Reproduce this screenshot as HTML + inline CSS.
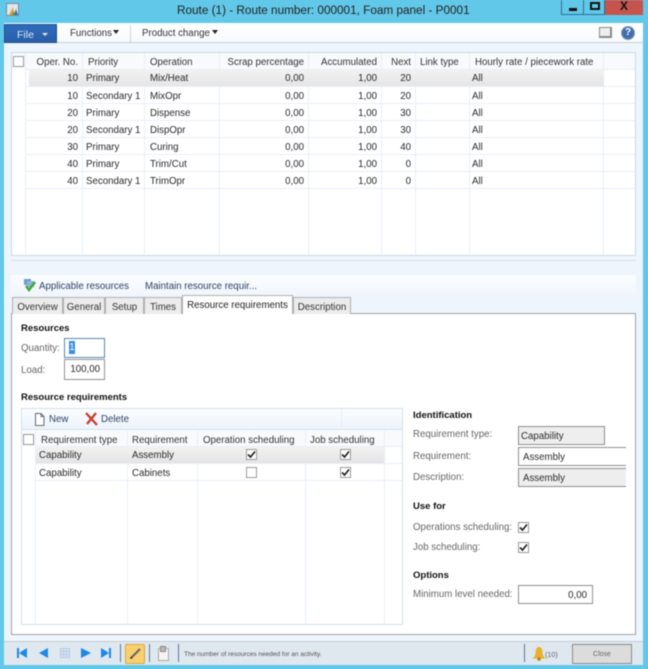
<!DOCTYPE html>
<html><head><meta charset="utf-8"><style>
html,body{margin:0;padding:0}
body{width:648px;height:669px;overflow:hidden;background:#62c8e9;position:relative;font-family:"Liberation Sans",sans-serif;font-size:9.7px;color:#2a2a2a}
#w{position:absolute;left:0;top:0;width:648px;height:669px;filter:blur(.45px);overflow:hidden}
div,span.a,svg.a{position:absolute;box-sizing:border-box}
.t{white-space:nowrap;line-height:14px;height:14px;margin-top:1px}
.r{text-align:right}
.h{color:#333}
.l{color:#666}
.b{font-weight:bold;color:#111;font-size:9.5px}
.vl{width:1px;background:#e6eff8}
.hl{height:1px;background:#e6eff8}
.cb{width:11px;height:11px;border:1px solid #9a9a9a;background:#fff}
.cb svg{position:absolute;left:0;top:0}
.tab{top:297px;height:17px;background:#ececec;border:1px solid #b0b0b0;border-bottom:none;text-align:center;line-height:19px;color:#333;white-space:nowrap}
.in{background:#fff;border:1px solid #8f8f8f;line-height:19px;padding:0 3px;white-space:nowrap;overflow:hidden}
</style></head><body><div id="w">
<div style="left:6px;top:3px;width:13px;height:13px;background:#dfe6ee;border:1px solid #7d8b9c"></div>
<svg class="a" style="left:7px;top:4px" width="12" height="12"><path d="M2 11L6 3L7 11Z" fill="#e8a020"/><path d="M7 11L9 5L11 11Z" fill="#3a6db0"/><path d="M5 11L7 7L8 11Z" fill="#4a9a40"/></svg>
<div class="t" style="left:177px;top:1px;font-size:11.75px;line-height:17px;height:17px;color:#222">Route (1) - Route number: 000001, Foam panel - P0001</div>
<div style="left:561px;top:0;width:23px;height:15px;background:#62c8e9;border:1px solid #2d6f92;border-top:none"></div>
<div style="left:569px;top:8px;width:8px;height:3px;background:#111"></div>
<div style="left:584px;top:0;width:21px;height:15px;background:#62c8e9;border:1px solid #2d6f92;border-left:none;border-top:none"></div>
<div style="left:590px;top:2px;width:10px;height:8px;border:2px solid #111"></div>
<div style="left:605px;top:0;width:38px;height:15px;background:#c4544c"></div>
<div class="t" style="left:620px;top:-2px;font-size:12px;font-weight:bold;color:#111;line-height:14px">X</div>

<div style="left:4px;top:23px;width:639px;height:642px;background:#eef5fc"></div>
<div style="left:4px;top:23px;width:639px;height:20px;background:linear-gradient(#fff,#f8fafd);border-bottom:1px solid #c6ced7"></div>
<div style="left:4px;top:24px;width:53px;height:19px;background:linear-gradient(#2f6cbc,#2a5ea8);border:1px solid #1f4f90"></div>
<div class="t" style="left:17px;top:27px;color:#dce8f6;font-size:10.5px">File</div>
<div style="left:42px;top:33px;border:3px solid transparent;border-top:3px solid #e5eef8;border-bottom:none;width:0;height:0"></div>
<div class="t" style="left:70px;top:26px;color:#333">Functions</div>
<div style="left:113px;top:30px;border:3px solid transparent;border-top:4px solid #222;border-bottom:none;width:0;height:0"></div>
<div style="left:130px;top:25px;width:1px;height:17px;background:#d0d6dd"></div>
<div class="t" style="left:142px;top:26px;color:#333">Product change</div>
<div style="left:212px;top:30px;border:3px solid transparent;border-top:4px solid #222;border-bottom:none;width:0;height:0"></div>
<div style="left:599px;top:27px;width:13px;height:11px;background:#eee;border:1px solid #8a8a8a;border-right-width:2px;border-bottom-width:2px"></div>
<div style="left:621px;top:26px;width:14px;height:14px;border-radius:50%;background:#3f6fb0;border:1px solid #8b9bb0;color:#fff;font-size:10px;font-weight:bold;text-align:center;line-height:12px">?</div>

<!-- top grid -->
<div style="left:11px;top:52px;width:625px;height:204px;background:#fff;border:1px solid #c9d9ea"></div>
<div style="left:12px;top:53px;width:623px;height:16px;background:#f8fafc"></div>
<div class="vl" style="left:25px;top:53px;height:202px"></div>
<div class="vl" style="left:82px;top:53px;height:202px"></div>
<div class="vl" style="left:144px;top:53px;height:202px"></div>
<div class="vl" style="left:219px;top:53px;height:202px"></div>
<div class="vl" style="left:308px;top:53px;height:202px"></div>
<div class="vl" style="left:381px;top:53px;height:202px"></div>
<div class="vl" style="left:415px;top:53px;height:202px"></div>
<div class="vl" style="left:469px;top:53px;height:202px"></div>
<div class="vl" style="left:603px;top:53px;height:202px"></div>
<div class="hl" style="left:26px;top:69px;width:609px"></div>
<div class="hl" style="left:26px;top:86px;width:609px"></div>
<div class="hl" style="left:26px;top:103px;width:609px"></div>
<div class="hl" style="left:26px;top:120px;width:609px"></div>
<div class="hl" style="left:26px;top:137px;width:609px"></div>
<div class="hl" style="left:26px;top:154px;width:609px"></div>
<div class="hl" style="left:26px;top:171px;width:609px"></div>
<div class="hl" style="left:26px;top:188px;width:609px"></div>
<div style="left:29px;top:70px;width:575px;height:16px;background:linear-gradient(#f2f2f2,#e5e5e5)"></div>
<div class="cb" style="left:13px;top:56px"></div>

<div class="t h r" style="left:26px;top:55px;width:52px">Oper. No.</div>
<div class="t h" style="left:88px;top:55px">Priority</div>
<div class="t h" style="left:150px;top:55px">Operation</div>
<div class="t h r" style="left:220px;top:55px;width:84px">Scrap percentage</div>
<div class="t h r" style="left:309px;top:55px;width:68px">Accumulated</div>
<div class="t h r" style="left:382px;top:55px;width:29px">Next</div>
<div class="t h" style="left:420px;top:55px">Link type</div>
<div class="t h" style="left:475px;top:55px">Hourly rate / piecework rate</div>

<div class="t r" style="left:26px;top:71px;width:52px">10</div><div class="t" style="left:86px;top:71px">Primary</div><div class="t" style="left:150px;top:71px">Mix/Heat</div><div class="t r" style="left:220px;top:71px;width:84px">0,00</div><div class="t r" style="left:309px;top:71px;width:68px">1,00</div><div class="t r" style="left:382px;top:71px;width:29px">20</div><div class="t" style="left:472px;top:71px">All</div>
<div class="t r" style="left:26px;top:89px;width:52px">10</div><div class="t" style="left:86px;top:89px">Secondary 1</div><div class="t" style="left:150px;top:89px">MixOpr</div><div class="t r" style="left:220px;top:89px;width:84px">0,00</div><div class="t r" style="left:309px;top:89px;width:68px">1,00</div><div class="t r" style="left:382px;top:89px;width:29px">20</div><div class="t" style="left:472px;top:89px">All</div>
<div class="t r" style="left:26px;top:106px;width:52px">20</div><div class="t" style="left:86px;top:106px">Primary</div><div class="t" style="left:150px;top:106px">Dispense</div><div class="t r" style="left:220px;top:106px;width:84px">0,00</div><div class="t r" style="left:309px;top:106px;width:68px">1,00</div><div class="t r" style="left:382px;top:106px;width:29px">30</div><div class="t" style="left:472px;top:106px">All</div>
<div class="t r" style="left:26px;top:123px;width:52px">20</div><div class="t" style="left:86px;top:123px">Secondary 1</div><div class="t" style="left:150px;top:123px">DispOpr</div><div class="t r" style="left:220px;top:123px;width:84px">0,00</div><div class="t r" style="left:309px;top:123px;width:68px">1,00</div><div class="t r" style="left:382px;top:123px;width:29px">30</div><div class="t" style="left:472px;top:123px">All</div>
<div class="t r" style="left:26px;top:140px;width:52px">30</div><div class="t" style="left:86px;top:140px">Primary</div><div class="t" style="left:150px;top:140px">Curing</div><div class="t r" style="left:220px;top:140px;width:84px">0,00</div><div class="t r" style="left:309px;top:140px;width:68px">1,00</div><div class="t r" style="left:382px;top:140px;width:29px">40</div><div class="t" style="left:472px;top:140px">All</div>
<div class="t r" style="left:26px;top:157px;width:52px">40</div><div class="t" style="left:86px;top:157px">Primary</div><div class="t" style="left:150px;top:157px">Trim/Cut</div><div class="t r" style="left:220px;top:157px;width:84px">0,00</div><div class="t r" style="left:309px;top:157px;width:68px">1,00</div><div class="t r" style="left:382px;top:157px;width:29px">0</div><div class="t" style="left:472px;top:157px">All</div>
<div class="t r" style="left:26px;top:174px;width:52px">40</div><div class="t" style="left:86px;top:174px">Secondary 1</div><div class="t" style="left:150px;top:174px">TrimOpr</div><div class="t r" style="left:220px;top:174px;width:84px">0,00</div><div class="t r" style="left:309px;top:174px;width:68px">1,00</div><div class="t r" style="left:382px;top:174px;width:29px">0</div><div class="t" style="left:472px;top:174px">All</div>

<div style="left:11px;top:260px;width:625px;height:1px;background:#d5e0eb"></div>

<!-- action bar -->
<div style="left:11px;top:275px;width:625px;height:20px;background:linear-gradient(#fbfdff,#f1f6fc)"></div>
<svg class="a" style="left:23px;top:278px" width="14" height="14"><rect x="1" y="1" width="7" height="6" fill="#6f9cc8"/><rect x="4" y="3" width="7" height="6" fill="#8fb5d8"/><path d="M3 8L6 12L12 4" fill="none" stroke="#3fa535" stroke-width="2.4"/></svg>
<div class="t" style="left:39px;top:279px;color:#2d3f66">Applicable resources</div>
<div class="t" style="left:145px;top:279px;color:#2d3f66">Maintain resource requir...</div>

<!-- tab panel -->
<div style="left:11px;top:313px;width:625px;height:322px;background:#fff;border:1px solid #a3a3a3"></div>
<div class="tab" style="left:12px;width:51px">Overview</div>
<div class="tab" style="left:63px;width:42px">General</div>
<div class="tab" style="left:105px;width:39px">Setup</div>
<div class="tab" style="left:144px;width:38px">Times</div>
<div class="tab" style="left:182px;top:295px;height:19px;width:111px;background:#fff;color:#222">Resource requirements</div>
<div class="tab" style="left:293px;width:58px">Description</div>

<div class="t b" style="left:21px;top:321px">Resources</div>
<div class="t l" style="left:21px;top:341px">Quantity:</div>
<div class="in" style="left:64px;top:338px;width:41px;height:20px;border-color:#4f86b8"></div>
<div style="left:69px;top:341px;width:6px;height:13px;background:#3a8ee0;color:#fff;line-height:14px;text-align:center">1</div>
<div class="t l" style="left:21px;top:363px">Load:</div>
<div class="in r" style="left:64px;top:359px;width:41px;height:21px;text-align:right;line-height:20px;padding-right:4px">100,00</div>

<div class="t b" style="left:21px;top:390px">Resource requirements</div>
<!-- sub grid -->
<div style="left:21px;top:408px;width:382px;height:217px;background:#fff;border:1px solid #d3e1ef"></div>
<div style="left:22px;top:409px;width:380px;height:21px;background:linear-gradient(#fbfdff,#edf4fb);border-bottom:1px solid #cfdeed"></div>
<div class="vl" style="left:341px;top:409px;height:21px"></div>
<svg class="a" style="left:34px;top:413px" width="11" height="13"><path d="M1.5 .5H7L10 3.5V12.5H1.5Z" fill="#fff" stroke="#667"/><path d="M7 .5V3.5H10" fill="none" stroke="#667"/></svg>
<div class="t" style="left:49px;top:412px;color:#2d3f66">New</div>
<svg class="a" style="left:85px;top:412px" width="13" height="14"><path d="M1 1L12 13M11 1L2 12" stroke="#c8402c" stroke-width="2.4" fill="none"/></svg>
<div class="t" style="left:101px;top:412px;color:#2d3f66">Delete</div>
<div style="left:22px;top:431px;width:380px;height:15px;background:#f8fafc"></div>
<div class="cb" style="left:23px;top:434px"></div>
<div class="vl" style="left:35px;top:431px;height:193px"></div>
<div class="vl" style="left:127px;top:431px;height:193px"></div>
<div class="vl" style="left:197px;top:431px;height:193px"></div>
<div class="vl" style="left:305px;top:431px;height:193px"></div>
<div class="vl" style="left:384px;top:431px;height:193px"></div>
<div class="hl" style="left:36px;top:446px;width:366px"></div>
<div class="hl" style="left:36px;top:463px;width:366px"></div>
<div class="hl" style="left:36px;top:480px;width:366px"></div>
<div style="left:36px;top:447px;width:348px;height:16px;background:linear-gradient(#f2f2f2,#e4e4e4)"></div>
<div class="t h" style="left:41px;top:433px">Requirement type</div>
<div class="t h" style="left:132px;top:433px">Requirement</div>
<div class="t h" style="left:203px;top:433px">Operation scheduling</div>
<div class="t h" style="left:310px;top:433px">Job scheduling</div>
<div class="t" style="left:39px;top:448px">Capability</div><div class="t" style="left:132px;top:448px">Assembly</div>
<div class="t" style="left:39px;top:466px">Capability</div><div class="t" style="left:132px;top:466px">Cabinets</div>
<div class="cb" style="left:246px;top:449px"><svg width="9" height="9"><path d="M1 4.5L3.5 7L8 1.500" fill="none" stroke="#222" stroke-width="1.7"/></svg></div>
<div class="cb" style="left:340px;top:449px"><svg width="9" height="9"><path d="M1 4.5L3.5 7L8 1.500" fill="none" stroke="#222" stroke-width="1.7"/></svg></div>
<div class="cb" style="left:246px;top:467px"></div>
<div class="cb" style="left:340px;top:467px"><svg width="9" height="9"><path d="M1 4.5L3.5 7L8 1.500" fill="none" stroke="#222" stroke-width="1.7"/></svg></div>

<!-- right -->
<div class="t b" style="left:413px;top:408px">Identification</div>
<div class="t l" style="left:413px;top:427px">Requirement type:</div>
<div class="in" style="left:518px;top:426px;width:87px;height:19px;background:#eee;padding-left:2px;line-height:20px">Capability</div>
<div class="t l" style="left:413px;top:449px">Requirement:</div>
<div class="in" style="left:518px;top:447px;width:108px;height:19px;padding-left:4px;border-right:none">Assembly</div>
<div class="t l" style="left:413px;top:470px">Description:</div>
<div class="in" style="left:518px;top:468px;width:108px;height:19px;padding-left:4px;background:#eee;border-right:none">Assembly</div>
<div class="t b" style="left:413px;top:499px">Use for</div>
<div class="t l" style="left:413px;top:520px">Operations scheduling:</div>
<div class="cb" style="left:518px;top:522px"><svg width="9" height="9"><path d="M1 4.5L3.5 7L8 1.500" fill="none" stroke="#222" stroke-width="1.7"/></svg></div>
<div class="t l" style="left:413px;top:540px">Job scheduling:</div>
<div class="cb" style="left:518px;top:542px"><svg width="9" height="9"><path d="M1 4.5L3.5 7L8 1.500" fill="none" stroke="#222" stroke-width="1.7"/></svg></div>
<div class="t b" style="left:413px;top:568px">Options</div>
<div class="t l" style="left:413px;top:587px">Minimum level needed:</div>
<div class="in" style="left:518px;top:585px;width:75px;height:19px;text-align:right;padding-right:5px">0,00</div>

<!-- status bar -->
<div style="left:4px;top:641px;width:639px;height:24px;background:#dfe7ef;border-top:1px solid #c4ccd5"></div>
<svg class="a" style="left:15px;top:647px" width="110" height="13">
<rect x="2" y="1" width="2" height="10" fill="#1e88e5"/><path d="M12 1V11L4 6Z" fill="#1e88e5"/>
<path d="M33 1V11L24 6Z" fill="#1e88e5"/>
<path d="M45.5 1.5H54.5V10.5H45.5ZM45.5 4.5H54.5M45.5 7.5H54.5M48.5 1.5V10.5M51.5 1.5V10.5" fill="#dbe6f2" stroke="#b5cbe2"/>
<path d="M66 1V11L76 6Z" fill="#1e88e5"/>
<path d="M86 1V11L94 6Z" fill="#1e88e5"/><rect x="94" y="1" width="2" height="10" fill="#1e88e5"/>
</svg>
<div style="left:120px;top:644px;width:1px;height:18px;background:#5b7a9a"></div>
<div style="left:125px;top:644px;width:20px;height:20px;background:#f8d070;border:1px solid #d9a73a;border-radius:2px"></div>
<svg class="a" style="left:127px;top:646px" width="16" height="16"><path d="M4.500 11.500L13 3" stroke="#666" stroke-width="2"/><path d="M3 13L3.800 10.500L5.500 12.200Z" fill="#222"/></svg>
<div style="left:149px;top:644px;width:1px;height:18px;background:#5b7a9a"></div>
<div style="left:158px;top:648px;width:11px;height:13px;background:#f4f4f4;border:1px solid #aaa"></div>
<div style="left:160px;top:646px;width:6px;height:6px;background:#bbb;border:1px solid #888"></div>
<div style="left:178px;top:644px;width:1px;height:18px;background:#5b7a9a"></div>
<div class="t" style="left:184px;top:647px;font-size:6.5px;color:#555">The number of resources needed for an activity.</div>
<div style="left:524px;top:644px;width:1px;height:18px;background:#5b7a9a"></div>
<svg class="a" style="left:532px;top:646px" width="14" height="15"><path d="M7 1C4 1 3.500 4 3.500 7C3.500 10 1.500 11 .5 12.500H13.500C12.500 11 10.500 10 10.500 7C10.500 4 10 1 7 1Z" fill="#e9b22e"/><circle cx="7" cy="13" r="1.800" fill="#b9821a"/></svg>
<div class="t" style="left:545px;top:647px;font-size:7.2px;color:#666">(10)</div>
<div style="left:572px;top:644px;width:60px;height:20px;background:#dcdcdc;border:1px solid #8a8a8a;text-align:center;line-height:20px;font-size:7px;color:#666">Close</div>
</div></body></html>
